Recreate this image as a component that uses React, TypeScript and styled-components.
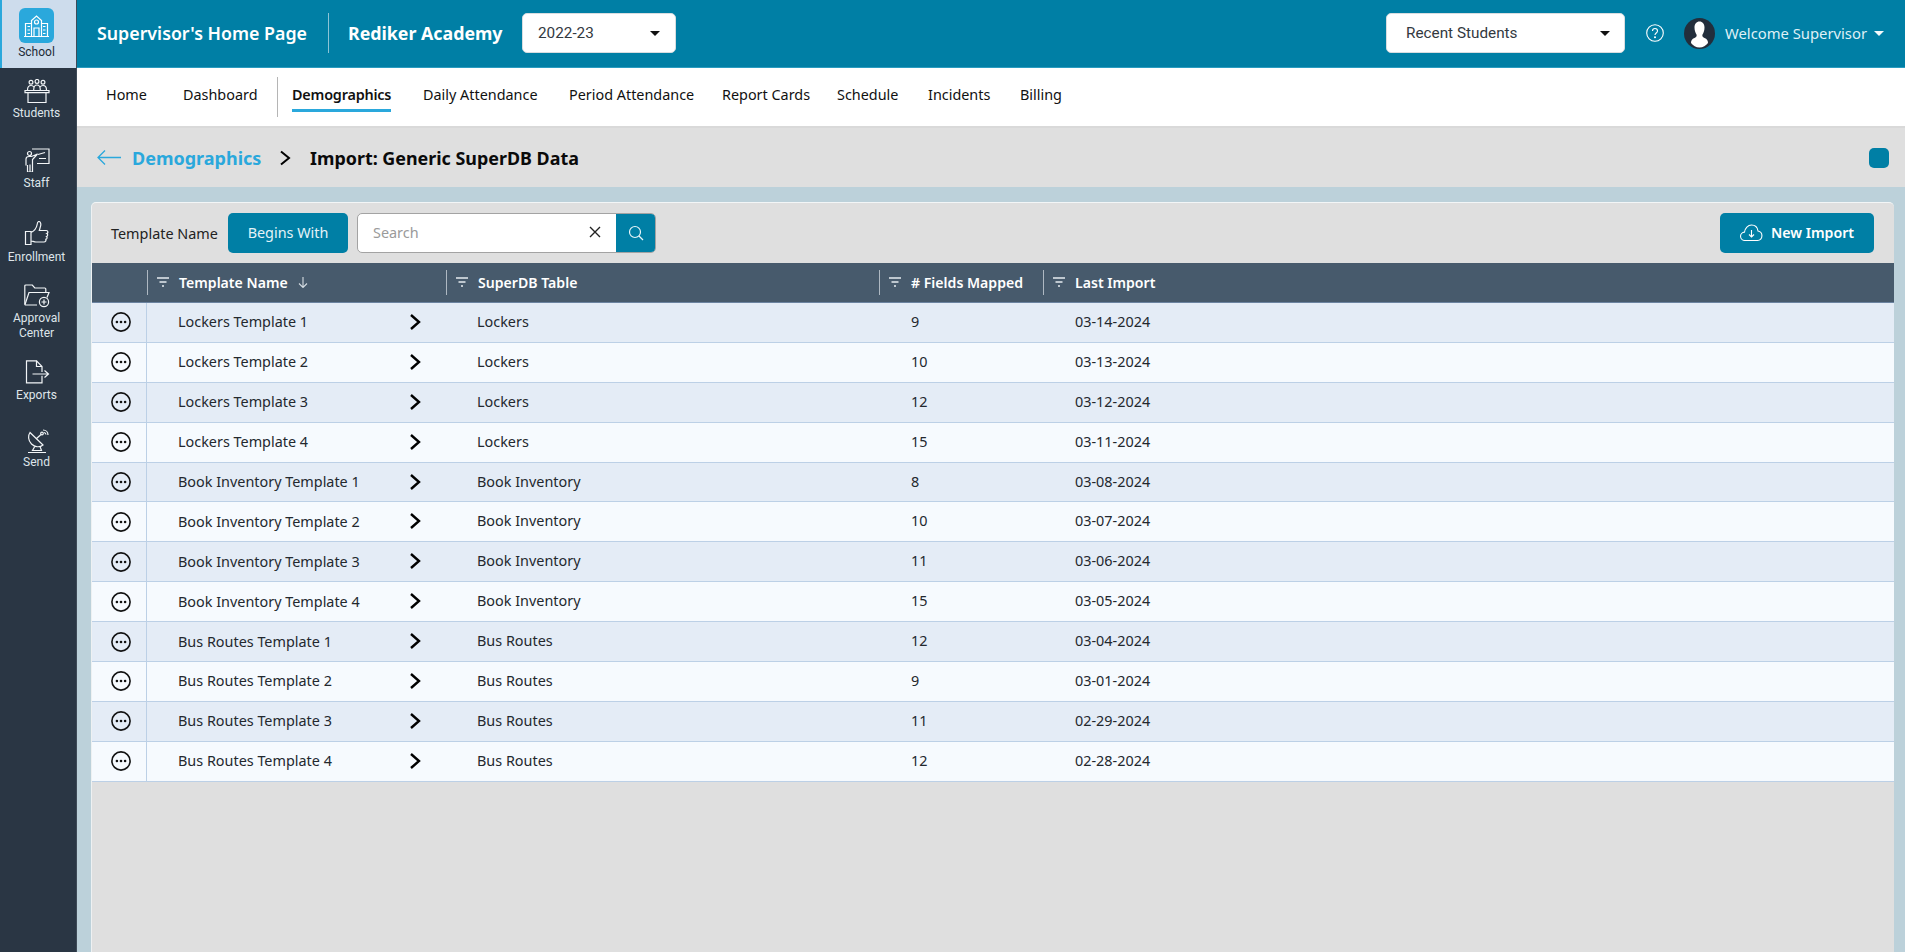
import React from "react";
import styled, { createGlobalStyle } from "styled-components";

const Global = createGlobalStyle`
  html, body { margin: 0; padding: 0; height: 100%; overflow: hidden; }
  body { font-family: "Noto Sans", "Open Sans", sans-serif; background: #dfdfdf; }
  * { box-sizing: border-box; }
`;

const Shell = styled.div`
  display: flex;
  width: 1905px;
  height: 952px;
  overflow: hidden;
`;
const Sidebar = styled.aside`
  width: 77px;
  flex: none;
  background: #2a3644;
  display: flex;
  flex-direction: column;
  font-family: Roboto, sans-serif;
  border-right: 1px solid #3f4b58;
`;
const SideItem = styled.div<{ $h: number; $active?: boolean }>`
  height: ${(p) => p.$h}px;
  flex: none;
  display: flex;
  flex-direction: column;
  align-items: center;
  color: ${(p) => (p.$active ? "#1c2a36" : "#dfe5ea")};
  background: ${(p) => (p.$active ? "#cddcec" : "transparent")};
  border-left: ${(p) => (p.$active ? "2px solid #2aa8dc" : "none")};
  font-size: 12px;
  line-height: 15px;
  text-align: center;
  padding: ${(p) => (p.$active ? "8px 5px 0 0" : "11px 3px 0 0")};
`;
const SchoolBadge = styled.div`
  width: 35px;
  height: 35px;
  background: #2aa8dc;
  border-radius: 6px;
  display: flex;
  align-items: center;
  justify-content: center;
  margin-bottom: 2px;
`;
const SideIcon = styled.svg<{ $gap: number }>`
  width: 26px;
  height: 24px;
  display: block;
  margin-bottom: ${(p) => p.$gap}px;
  fill: none;
  stroke: #f2f5f7;
  stroke-width: 1.2;
`;
const Main = styled.div`
  flex: 1;
  min-width: 0;
  display: flex;
  flex-direction: column;
`;
const Header = styled.header`
  height: 68px;
  flex: none;
  background: #007fa5;
  border-bottom: 1px solid #2a9cc0;
  display: flex;
  align-items: center;
  padding: 0 21px 1px 20px;
  color: #fff;
`;
const Title = styled.div<{ $w: number; $bold?: boolean }>`
  width: ${(p) => p.$w}px;
  flex: none;
  font-size: 17.8px;
  font-weight: ${(p) => (p.$bold ? 700 : 600)};
  white-space: nowrap;
`;
const TitleDivider = styled.div`
  width: 1px;
  height: 40px;
  background: #8cc4d6;
  margin-right: 19px;
  flex: none;
`;
const Select = styled.div<{ $w: number; $pad: string }>`
  width: ${(p) => p.$w}px;
  height: 40px;
  flex: none;
  background: #fff;
  border-radius: 5px;
  border: 1px solid #d8dde0;
  font-family: Roboto, sans-serif;
  font-size: 15.3px;
  color: #33393f;
  display: flex;
  align-items: center;
  justify-content: space-between;
  padding: ${(p) => p.$pad};
`;
const Caret = styled.span<{ $c?: string }>`
  width: 0;
  height: 0;
  border-left: 5px solid transparent;
  border-right: 5px solid transparent;
  border-top: 5px solid ${(p) => p.$c || "#111"};
  flex: none;
`;
const Spacer = styled.div`
  flex: 1;
`;
const HelpWrap = styled.div`
  margin: 0 20px 0 21px;
  display: flex;
  flex: none;
`;
const Welcome = styled.div`
  font-size: 14.8px;
  color: #dff0f6;
  margin: 0 9px 0 10px;
  white-space: nowrap;
  width: 140px;
`;
const Nav = styled.nav`
  height: 60px;
  flex: none;
  background: #fff;
  border-bottom: 2px solid #d9d9d9;
  display: flex;
  align-items: center;
  padding-left: 29px;
`;
const NavItem = styled.div<{ $w: number; $on?: boolean }>`
  width: ${(p) => p.$w}px;
  flex: none;
  font-size: 14.4px;
  line-height: 20px;
  font-weight: ${(p) => (p.$on ? 600 : 400)};
  letter-spacing: ${(p) => (p.$on ? "-0.2px" : "0")};
  color: #111;
  white-space: nowrap;
`;
const NavLabel = styled.span<{ $on?: boolean }>`
  display: inline-block;
  padding: 2px 0 4px;
  border-bottom: 3px solid ${(p) => (p.$on ? "#2aa8dc" : "transparent")};
`;
const NavDivider = styled.div`
  width: 1px;
  height: 40px;
  background: #b5b5b5;
  flex: none;
  margin-right: 14px;
`;
const Crumbs = styled.div`
  height: 59px;
  flex: none;
  background: #dfdfdf;
  display: flex;
  align-items: center;
  padding: 0 16px 0 20px;
`;
const CrumbLink = styled.div`
  color: #2aa8dc;
  font-size: 18px;
  font-weight: 700;
  margin-left: 11px;
  width: 147px;
  white-space: nowrap;
`;
const CrumbNow = styled.div`
  color: #0a0a0a;
  font-size: 17.9px;
  font-weight: 700;
  margin-left: 19px;
  white-space: nowrap;
`;
const Stop = styled.div`
  width: 20px;
  height: 20px;
  background: #007fa5;
  border-radius: 5px;
  flex: none;
`;
const Band = styled.div`
  flex: 1;
  min-height: 0;
  background: #bcd1da;
  padding: 15px 11px 0 14px;
  display: flex;
`;
const Card = styled.section`
  flex: 1;
  min-width: 0;
  background: #dfdfdf;
  border-radius: 5px 5px 0 0;
  border-top: 1px solid #f3f6f7;
  border-left: 1px solid #eef1f2;
  display: flex;
  flex-direction: column;
`;
const Toolbar = styled.div`
  height: 60px;
  flex: none;
  display: flex;
  align-items: center;
  padding: 0 20px 0 19px;
`;
const FilterLabel = styled.div`
  font-size: 14.4px;
  color: #222;
  width: 117px;
  flex: none;
  white-space: nowrap;
`;
const FilterBtn = styled.div`
  width: 120px;
  height: 40px;
  flex: none;
  background: #007fa5;
  border-radius: 5px;
  color: #e4f3f8;
  font-size: 14.4px;
  padding-bottom: 2px;
  display: flex;
  align-items: center;
  justify-content: center;
`;
const SearchBox = styled.div`
  margin-left: 9px;
  width: 299px;
  height: 40px;
  flex: none;
  display: flex;
  background: #fff;
  border: 1px solid #a3a3a3;
  border-radius: 5px;
  overflow: hidden;
`;
const SearchText = styled.div`
  flex: 1;
  color: #9a9a9a;
  font-size: 14.4px;
  padding: 0 15px 2px 15px;
  display: flex;
  align-items: center;
  justify-content: space-between;
`;
const SearchBtn = styled.div`
  width: 39px;
  background: #007fa5;
  display: flex;
  align-items: center;
  justify-content: center;
  flex: none;
`;
const ImportBtn = styled.div`
  width: 154px;
  height: 40px;
  flex: none;
  background: #007fa5;
  border-radius: 5px;
  color: #fff;
  font-size: 14.2px;
  font-weight: 600;
  padding-bottom: 1px;
  display: flex;
  align-items: center;
  justify-content: center;
  gap: 8px;
`;
const Cols = "55px 299px 433px 164px 1fr";
const HeadRow = styled.div`
  height: 40px;
  flex: none;
  display: grid;
  grid-template-columns: ${Cols};
  background: #475a6c;
  border-bottom: 1px solid #6b83a0;
  color: #fff;
  font-size: 14.1px;
  font-weight: 600;
`;
const HeadCell = styled.div<{ $div?: boolean; $pad: number }>`
  display: flex;
  align-items: center;
  white-space: nowrap;
  padding-left: ${(p) => p.$pad}px;
  padding-bottom: 1px;
  position: relative;
  &::before {
    content: "";
    display: ${(p) => (p.$div ? "block" : "none")};
    position: absolute;
    left: 0;
    top: 7px;
    bottom: 7px;
    width: 1px;
    background: #aeb8c2;
  }
`;
const FilterSvg = styled.svg`
  width: 14px;
  height: 12px;
  margin-right: 9px;
  flex: none;
`;
const SortArrow = styled.svg`
  width: 10px;
  height: 11px;
  margin-left: 10px;
  flex: none;
`;
const Row = styled.div<{ $alt: boolean }>`
  height: 39.9px;
  flex: none;
  display: grid;
  grid-template-columns: ${Cols};
  background: ${(p) => (p.$alt ? "#f6fafe" : "#e4ecf6")};
  border-bottom: 1px solid #bcd0e6;
  color: #23282e;
  font-size: 14.4px;
`;
const ActionCell = styled.div`
  display: flex;
  align-items: center;
  justify-content: center;
  padding-left: 3px;
  border-right: 1px solid #bcd0e6;
`;
const NameCell = styled.div`
  display: flex;
  align-items: center;
  justify-content: space-between;
  padding: 0 25px 1px 31px;
  white-space: nowrap;
`;
const Cell = styled.div<{ $pad: number }>`
  display: flex;
  align-items: center;
  padding: 0 0 2px ${(p) => p.$pad}px;
  white-space: nowrap;
`;

const rows: [string, string, string, string][] = [
  ["Lockers Template 1", "Lockers", "9", "03-14-2024"],
  ["Lockers Template 2", "Lockers", "10", "03-13-2024"],
  ["Lockers Template 3", "Lockers", "12", "03-12-2024"],
  ["Lockers Template 4", "Lockers", "15", "03-11-2024"],
  ["Book Inventory Template 1", "Book Inventory", "8", "03-08-2024"],
  ["Book Inventory Template 2", "Book Inventory", "10", "03-07-2024"],
  ["Book Inventory Template 3", "Book Inventory", "11", "03-06-2024"],
  ["Book Inventory Template 4", "Book Inventory", "15", "03-05-2024"],
  ["Bus Routes Template 1", "Bus Routes", "12", "03-04-2024"],
  ["Bus Routes Template 2", "Bus Routes", "9", "03-01-2024"],
  ["Bus Routes Template 3", "Bus Routes", "11", "02-29-2024"],
  ["Bus Routes Template 4", "Bus Routes", "12", "02-28-2024"],
];

const FilterIcon = () => (
  <FilterSvg viewBox="0 0 14 12" fill="none" stroke="#e6ebef" strokeWidth="1.4">
    <path d="M1 2h12M3.5 6h7M6 10h2" />
  </FilterSvg>
);
const Dots = () => (
  <svg width="20" height="20" viewBox="0 0 20 20" fill="none">
    <circle cx="10" cy="10" r="9.1" stroke="#111" strokeWidth="1.6" />
    <circle cx="5.9" cy="10" r="1.3" fill="#111" />
    <circle cx="10" cy="10" r="1.3" fill="#111" />
    <circle cx="14.1" cy="10" r="1.3" fill="#111" />
  </svg>
);
const Chevron = () => (
  <svg width="12" height="18" viewBox="0 0 12 18" fill="none" stroke="#000" strokeWidth="2.4">
    <path d="M2 2l8 7-8 7" />
  </svg>
);

export default function App() {
  return (
    <Shell>
      <Global />
      <Sidebar>
        <SideItem $h={68} $active>
          <SchoolBadge>
            <svg width="27" height="27" viewBox="0 0 27 27" fill="none" stroke="#fff" strokeWidth="1.2">
              <path d="M2.500 24V11.500h6M24.500 24V11.500h-6M8.500 24V8.500l5-4.500 5 4.500V24M1 24.500h25" />
              <circle cx="13.500" cy="10" r="2" />
              <path d="M11 24v-8h5v8M4.500 14.500h2.500M4.500 18h2.500M4.500 21.500h2.500M20 14.500h2.500M20 18h2.500M20 21.500h2.500" />
            </svg>
          </SchoolBadge>
          School
        </SideItem>
        <SideItem $h={69}>
          <SideIcon $gap={3} viewBox="0 0 26 24">
            <circle cx="7" cy="3.200" r="1.900" />
            <circle cx="13" cy="2.400" r="1.900" />
            <circle cx="19" cy="3.200" r="1.900" />
            <path d="M3.500 11c0-3 1.500-4.500 3.500-4.500 1.300 0 2.300.6 2.800 1.500M9.700 11c0-3 1.300-5 3.300-5s3.300 2 3.300 5M16.200 8c.5-.9 1.500-1.500 2.800-1.500 2 0 3.500 1.500 3.500 4.500" />
            <path d="M1 11.500h24v2.200H1zM4 13.700v9.800h18v-9.800" />
          </SideIcon>
          Students
        </SideItem>
        <SideItem $h={73}>
          <SideIcon $gap={4} viewBox="0 0 26 24">
            <path d="M8 1h17v14.500H13M14 6.500l7-2M15 10.500h7" />
            <circle cx="5.500" cy="5.500" r="2" />
            <path d="M2 17.500V11c0-1.500 1-2.500 3-2.500h2.500l6-2.500-5 5.500v12.500H3.500v-7M6 23.500v-7" />
          </SideIcon>
          Staff
        </SideItem>
        <SideItem $h={63}>
          <SideIcon $gap={5} viewBox="0 0 26 24">
            <path d="M1.500 10.500h5.500v13H1.500zM7 11.500c3-1.500 5.500-4.500 6-7.500.2-1.500.5-3.500 1.800-3.500 2 0 2.500 3 1.500 5.500l-1 3.500h7c1.800 0 2.200 2.500.5 3 1.300.7 1.200 2.500-.3 3 1 .8.7 2.500-.7 2.800.5 1.300-.3 2.700-1.800 2.700h-8c-2 0-3.500-1-5-1" />
          </SideIcon>
          Enrollment
        </SideItem>
        <SideItem $h={76}>
          <SideIcon $gap={3} viewBox="0 0 26 24">
            <path d="M13 21H1.800a1 1 0 0 1-1-1V2a1 1 0 0 1 1-1h6.500l2.500 3h10a1 1 0 0 1 1 1v3.500" />
            <path d="M1 20.500L5 8.500h20l-2 5" />
            <circle cx="20" cy="18" r="4.600" />
            <path d="M17.500 18h5M20 15.500v5" />
          </SideIcon>
          Approval
          <br />
          Center
        </SideItem>
        <SideItem $h={69}>
          <SideIcon $gap={4} viewBox="0 0 26 24">
            <path d="M18 12V6.500L12.500 .8H2.500v22H18v-7" />
            <path d="M12.500 .8v5.700H18" />
            <path d="M8.500 14h15.500M20.500 10.500L24.500 14l-4 3.500" />
          </SideIcon>
          Exports
        </SideItem>
        <SideItem $h={69}>
          <SideIcon $gap={2} viewBox="0 0 26 24">
            <path d="M6 3.500l13 12.500c-3 2.500-8 2.500-11.500-1C4 11.500 3.800 6.500 6 3.500z" />
            <path d="M12 10l5-4.500" />
            <circle cx="18" cy="4.500" r="1.300" />
            <path d="M19 1c2.800 0 5 2.200 5 5M20 3.500c1.200.2 1.800 1 2 2" />
            <path d="M10.500 18l-2 3.500h9l-1.500-4M4 23.500h18" />
          </SideIcon>
          Send
        </SideItem>
      </Sidebar>
      <Main>
        <Header>
          <Title $w={231}>Supervisor's Home Page</Title>
          <TitleDivider />
          <Title $w={174} $bold>
            Rediker Academy
          </Title>
          <Select $w={154} $pad="0 15px">
            2022-23
            <Caret />
          </Select>
          <Spacer />
          <Select $w={239} $pad="0 14px 0 19px">
            Recent Students
            <Caret />
          </Select>
          <HelpWrap>
            <svg width="18" height="18" viewBox="0 0 18 18" fill="none" stroke="#fff" strokeWidth="1.1">
              <circle cx="9" cy="9" r="8.300" />
              <path d="M6.500 7c0-1.500 1-2.500 2.500-2.500S11.500 5.500 11.500 7c0 2-2.500 2-2.500 4" />
              <circle cx="9" cy="13.300" r=".5" />
            </svg>
          </HelpWrap>
          <svg width="31" height="31" viewBox="0 0 31 31">
            <circle cx="15.500" cy="15.500" r="15.500" fill="#222e3c" />
            <path d="M15.500 3.500c3 0 5 2.500 5 6 0 3-1 5.500-2 7-.5 1.500 0 2.500 2 3.500 2.500 1 3.500 2.500 3.500 5-2 2.700-5 4.500-8.500 4.500s-6.500-1.800-8.500-4.500c0-2.500 1-4 3.500-5 2-1 2.500-2 2-3.500-1-1.500-2-4-2-7 0-3.500 2-6 5-6z" fill="#fff" />
          </svg>
          <Welcome>Welcome Supervisor</Welcome>
          <Caret $c="#f4fafc" />
        </Header>
        <Nav>
          <NavItem $w={77}>
            <NavLabel>Home</NavLabel>
          </NavItem>
          <NavItem $w={94}>
            <NavLabel>Dashboard</NavLabel>
          </NavItem>
          <NavDivider />
          <NavItem $w={131} $on>
            <NavLabel $on>Demographics</NavLabel>
          </NavItem>
          <NavItem $w={146}>
            <NavLabel>Daily Attendance</NavLabel>
          </NavItem>
          <NavItem $w={153}>
            <NavLabel>Period Attendance</NavLabel>
          </NavItem>
          <NavItem $w={115}>
            <NavLabel>Report Cards</NavLabel>
          </NavItem>
          <NavItem $w={91}>
            <NavLabel>Schedule</NavLabel>
          </NavItem>
          <NavItem $w={92}>
            <NavLabel>Incidents</NavLabel>
          </NavItem>
          <NavItem $w={60}>
            <NavLabel>Billing</NavLabel>
          </NavItem>
        </Nav>
        <Crumbs>
          <svg width="24" height="16" viewBox="0 0 24 16" fill="none" stroke="#2aa8dc" strokeWidth="1.3">
            <path d="M24 7.500H1M8 .5L1 7.500l7 7" />
          </svg>
          <CrumbLink>Demographics</CrumbLink>
          <svg width="12" height="16" viewBox="0 0 12 16" fill="none" stroke="#000" strokeWidth="2">
            <path d="M2 1.500l8 6.500-8 6.500" />
          </svg>
          <CrumbNow>Import: Generic SuperDB Data</CrumbNow>
          <Spacer />
          <Stop />
        </Crumbs>
        <Band>
          <Card>
            <Toolbar>
              <FilterLabel>Template Name</FilterLabel>
              <FilterBtn>Begins With</FilterBtn>
              <SearchBox>
                <SearchText>
                  Search
                  <svg width="12" height="12" viewBox="0 0 12 12" stroke="#222" strokeWidth="1.4">
                    <path d="M1 1l10 10M11 1L1 11" />
                  </svg>
                </SearchText>
                <SearchBtn>
                  <svg width="16" height="16" viewBox="0 0 16 16" fill="none" stroke="#e8f5f9" strokeWidth="1.2">
                    <circle cx="7" cy="7" r="5.500" />
                    <path d="M11 11l4 4" />
                  </svg>
                </SearchBtn>
              </SearchBox>
              <Spacer />
              <ImportBtn>
                <svg width="23" height="18" viewBox="0 0 23 18" fill="none" stroke="#fff" strokeWidth="1.1">
                  <path d="M6 16.500H5a4.200 4.200 0 0 1-.5-8.400C5 4 8 1 11.500 1S17.500 3.500 18 7a4.800 4.800 0 0 1-.5 9.500H6z" />
                  <path d="M11.500 6v6.500M9 10.500l2.500 2.500 2.500-2.500" />
                </svg>
                New Import
              </ImportBtn>
            </Toolbar>
            <HeadRow>
              <HeadCell $pad={0} />
              <HeadCell $div $pad={9}>
                <FilterIcon />
                Template Name
                <SortArrow viewBox="0 0 10 11" fill="none" stroke="#d5dce2" strokeWidth="1.1">
                  <path d="M5 0v10M1 6.500L5 10.500l4-4" />
                </SortArrow>
              </HeadCell>
              <HeadCell $div $pad={9}>
                <FilterIcon />
                SuperDB Table
              </HeadCell>
              <HeadCell $div $pad={9}>
                <FilterIcon />
                # Fields Mapped
              </HeadCell>
              <HeadCell $div $pad={9}>
                <FilterIcon />
                Last Import
              </HeadCell>
            </HeadRow>
            {rows.map((r, i) => (
              <Row key={r[0]} $alt={i % 2 === 1}>
                <ActionCell>
                  <Dots />
                </ActionCell>
                <NameCell>
                  {r[0]}
                  <Chevron />
                </NameCell>
                <Cell $pad={31}>{r[1]}</Cell>
                <Cell $pad={32}>{r[2]}</Cell>
                <Cell $pad={32}>{r[3]}</Cell>
              </Row>
            ))}
          </Card>
        </Band>
      </Main>
    </Shell>
  );
}
